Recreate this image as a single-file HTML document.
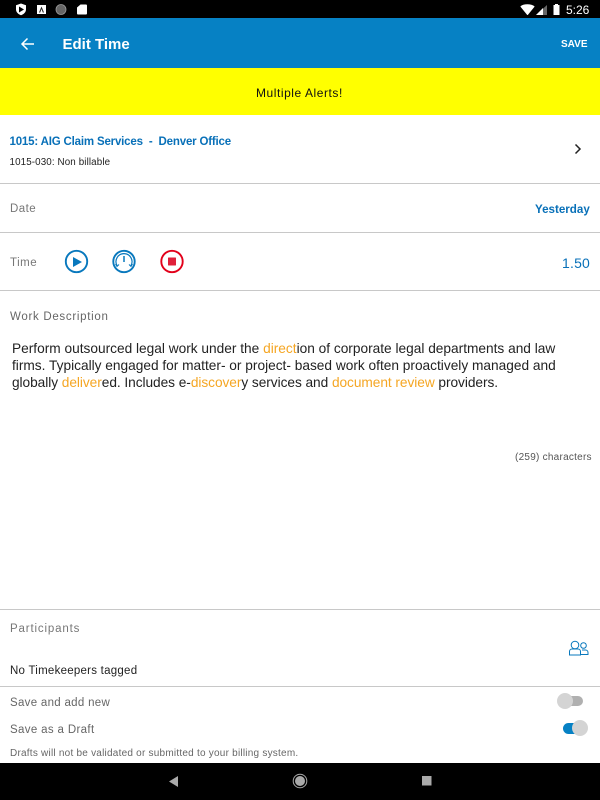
<!DOCTYPE html>
<html>
<head>
<meta charset="utf-8">
<style>
html,body{margin:0;padding:0;background:#fff}
#p{position:relative;width:600px;height:800px;overflow:hidden;background:#fff;font-family:"Liberation Sans",sans-serif}
.t{position:absolute;white-space:nowrap;line-height:16px;height:16px}
.b{position:absolute;left:0;width:600px;height:1px;background:#c8c8c8}
.o{color:#f5a623}
svg{position:absolute;overflow:visible}
</style>
</head>
<body>
<div id="p">
<div style="position:absolute;left:0;top:0;width:600px;height:18px;background:#000"></div>
<div style="position:absolute;left:0;top:18px;width:600px;height:50px;background:#0681c4"></div>
<div style="position:absolute;left:0;top:68px;width:600px;height:47px;background:#ffff00"></div>

<svg style="left:0;top:0" width="600" height="18">
<path d="M21 3.500l5 1.800v4c0 3-2 4.800-5 6-3-1.200-5-3-5-6v-4z" fill="#fff"/>
<path d="M19 6.500l5 3-5 3z" fill="#000"/>
<rect x="37" y="5" width="9" height="9" fill="#fff"/>
<path d="M41.500 6.500l-2.500 6h1.200l1.300-3.500 1.300 3.500h1.200z" fill="#222"/>
<circle cx="61" cy="9.500" r="5" fill="#666" stroke="#999" stroke-width=".8"/>
<path d="M80.500 4.500h5.500a1 1 0 0 1 1 1v8a1 1 0 0 1-1 1h-8a1 1 0 0 1-1-1v-6z" fill="#fff"/>
<path d="M521 6.500c2.500-2.400 10-2.400 13 0l-6.500 8z" fill="#fff" stroke="#fff" stroke-width="1" stroke-linejoin="round"/>
<path d="M547 5v10h-11z" fill="#666"/>
<path d="M543 15h-7l7-7z" fill="#fff"/>
<path d="M555 4h3v1h1.500v10h-6v-10h1.500z" fill="#fff"/>
</svg>
<div class="t" style="left:566px;top:2px;color:#fff;font-size:12px;">5:26</div>

<svg style="left:0;top:0" width="60" height="60" fill="none" stroke="#fff" stroke-width="1.500">
<path d="M34 44H22M27.500 38.500L22 44l5.500 5.500"/>
</svg>
<div class="t" style="left:62.500px;top:37px;color:#fff;font-size:15px;font-weight:bold">Edit Time</div>
<div class="t" style="left:561px;top:37px;color:#fff;font-size:10px;font-weight:bold">SAVE</div>

<div class="t" style="left:256px;top:85px;color:#111;font-size:12px;letter-spacing:.55px">Multiple Alerts!</div>

<div class="t" style="left:9.500px;top:133.500px;color:#0870b8;font-size:11.500px;font-weight:bold;letter-spacing:-.18px">1015: AIG Claim Services &nbsp;- &nbsp;Denver Office</div>
<div class="t" style="left:9.500px;top:155px;color:#222;font-size:9.800px;letter-spacing:.12px">1015-030: Non billable</div>
<svg style="left:574px;top:143px" width="8" height="12" fill="none" stroke="#222" stroke-width="1.500">
<path d="M1.500 1.500L6 6l-4.500 4.500"/>
</svg>
<div class="b" style="top:183px"></div>

<div class="t" style="left:10px;top:201px;color:#777;font-size:11.500px;letter-spacing:.45px">Date</div>
<div class="t" style="left:535px;top:202px;color:#0870b8;font-size:11.600px;font-weight:bold">Yesterday</div>
<div class="b" style="top:232px"></div>

<div class="t" style="left:10px;top:255px;color:#777;font-size:11.500px;letter-spacing:.5px">Time</div>
<svg style="left:65px;top:249.500px" width="24" height="24">
<circle cx="11.500" cy="11.500" r="10.700" fill="none" stroke="#0878bd" stroke-width="1.900"/>
<path d="M8 7l9 5-9 5z" fill="#0878bd"/>
</svg>
<svg style="left:112px;top:249.500px" width="24" height="24" fill="none" stroke="#0878bd">
<circle cx="12" cy="11.500" r="10.700" stroke-width="1.900"/>
<path d="M5 15.500a8 8 0 1 1 14 0" stroke-width="1.200"/>
<path d="M12 6v6" stroke-width="1.500"/>
<path d="M3.500 14l1.500 2.500 2-2M20.500 14l-1.500 2.500-2-2" stroke-width="1"/>
</svg>
<svg style="left:160px;top:249.500px" width="24" height="24">
<circle cx="12" cy="11.500" r="10.700" fill="none" stroke="#e2001a" stroke-width="1.900"/>
<rect x="8" y="7.500" width="8" height="8" rx=".5" fill="#e0203a"/>
</svg>
<div class="t" style="left:562px;top:255px;color:#0870b8;font-size:14px;letter-spacing:.2px">1.50</div>
<div class="b" style="top:290px"></div>

<div class="t" style="left:10px;top:309px;color:#666;font-size:11.500px;letter-spacing:.7px">Work Description</div>
<div class="t" style="left:12px;top:341px;color:#222;font-size:13.700px;letter-spacing:0">Perform outsourced legal work under the <span class="o">direct</span>ion of corporate legal departments and law</div>
<div class="t" style="left:12px;top:358px;color:#222;font-size:13.700px;letter-spacing:0">firms. Typically engaged for matter- or project- based work often proactively managed and</div>
<div class="t" style="left:12px;top:375px;color:#222;font-size:13.700px;letter-spacing:-.05px">globally <span class="o">deliver</span>ed. Includes e-<span class="o">discover</span>y services and <span class="o">document review</span> providers.</div>
<div class="t" style="left:515px;top:450px;color:#555;font-size:10px;letter-spacing:.25px">(259) characters</div>

<div class="b" style="top:609px"></div>
<div class="t" style="left:10px;top:621px;color:#777;font-size:11.500px;letter-spacing:.85px">Participants</div>
<svg style="left:0;top:0" width="600" height="800" fill="none" stroke="#0878bd" stroke-width="1">
<circle cx="575" cy="645" r="3.800"/>
<circle cx="583.500" cy="645.500" r="2.800"/>
<path d="M569.500 655v-3.500a2.500 2.500 0 0 1 2.500-2.500h6a2.500 2.500 0 0 1 2.500 2.500v3.500z"/>
<path d="M582 650h3.500a2.500 2.500 0 0 1 2.500 2.500v2h-7"/>
</svg>
<div class="t" style="left:10px;top:663px;color:#222;font-size:11.500px;letter-spacing:.25px">No Timekeepers tagged</div>
<div class="b" style="top:686px"></div>

<div class="t" style="left:10px;top:695px;color:#666;font-size:11.500px;letter-spacing:.3px">Save and add new</div>
<div style="position:absolute;left:559px;top:696px;width:24px;height:10px;border-radius:5px;background:#b0b0b0"></div>
<div style="position:absolute;left:556.500px;top:693px;width:16px;height:16px;border-radius:50%;background:#d4d4d4"></div>
<div class="t" style="left:10px;top:722px;color:#666;font-size:11.500px;letter-spacing:.35px">Save as a Draft</div>
<div style="position:absolute;left:563px;top:723px;width:24px;height:11px;border-radius:5.500px;background:#0681c4"></div>
<div style="position:absolute;left:572px;top:720px;width:16px;height:16px;border-radius:50%;background:#d4d4d4"></div>
<div class="t" style="left:10px;top:746px;color:#666;font-size:10px;letter-spacing:.23px">Drafts will not be validated or submitted to your billing system.</div>

<div style="position:absolute;left:0;top:763px;width:600px;height:37px;background:#000"></div>
<svg style="left:0;top:763px" width="600" height="37">
<path d="M178 13v11l-9-5.500z" fill="#aaa"/>
<circle cx="300" cy="18" r="6.800" fill="none" stroke="#aaa" stroke-width="1"/>
<circle cx="300" cy="18" r="5" fill="#aaa"/>
<rect x="422" y="13" width="9.500" height="9.500" fill="#aaa"/>
</svg>
</div>
</body>
</html>
